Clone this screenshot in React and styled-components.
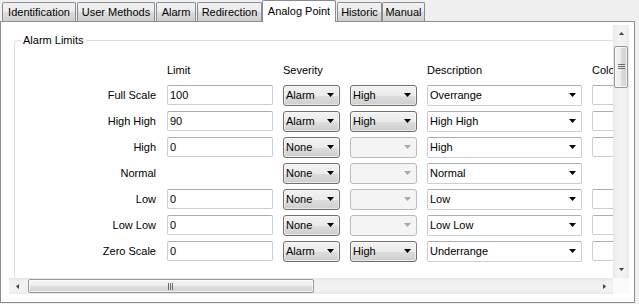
import React from "react";
import styled, { createGlobalStyle, css } from "styled-components";

const Global = createGlobalStyle`
  html, body { margin: 0; padding: 0; background: #f0f0f0; }
  body { font-family: "Liberation Sans", Arial, sans-serif; font-size: 11px; color: #000; }
`;

const Window = styled.div`
  width: 639px;
  height: 304px;
  background: #f0f0f0;
  overflow: hidden;
`;

const TabStrip = styled.div`
  position: relative;
  z-index: 1;
  display: flex;
  align-items: flex-end;
  height: 21px;
  padding-left: 2px;
`;

const Tab = styled.div`
  box-sizing: border-box;
  width: ${(p) => p.$w}px;
  margin-left: ${(p) => p.$ml}px;
  height: 19px;
  display: flex;
  align-items: center;
  justify-content: center;
  border: 1px solid #898c95;
  border-bottom: none;
  border-radius: 2px 2px 0 0;
  background: linear-gradient(#f2f2f2 0%, #ebebeb 50%, #dddddd 51%, #cfcfcf 100%);
  white-space: nowrap;
  ${(p) =>
    p.$active &&
    css`
      height: 22px;
      margin-bottom: -1px;
      background: #fff;
      padding-bottom: 1px;
    `}
`;

const Panel = styled.div`
  box-sizing: border-box;
  width: 635px;
  height: 282px;
  border: 1px solid #898c95;
  background: #fff;
  padding: 3px 5px 7px 8px;
`;

const ScrollFrame = styled.div`
  display: grid;
  grid-template-columns: 604px 16px;
  grid-template-rows: 253px 16px;
  width: 620px;
  height: 269px;
`;

const Viewport = styled.div`
  overflow: hidden;
  background: #fff;
`;

const Group = styled.fieldset`
  margin: 9px 0 0 5px;
  padding: 0;
  width: 700px;
  min-height: 320px;
  border: 1px solid #d5dfe5;
  border-radius: 3px;
  box-sizing: border-box;
`;

const Legend = styled.legend`
  margin-left: 6px;
  padding: 0 2px;
  line-height: 13px;
  font-size: 11px;
`;

const Grid = styled.div`
  display: grid;
  grid-template-columns: 142px 106px 57px 67px 155px 40px;
  grid-template-rows: 24px repeat(7, 26px);
  column-gap: 10px;
  align-items: center;
  margin-top: 11px;
`;

const Header = styled.div`
  white-space: nowrap;
`;

const RowLabel = styled.div`
  text-align: right;
  padding-right: 1px;
  white-space: nowrap;
`;

const TextBox = styled.div`
  box-sizing: border-box;
  height: 20px;
  border: 1px solid #c9ced6;
  border-top-color: #abadb3;
  border-radius: 2px;
  background: #fff;
  padding-left: 2px;
  display: flex;
  align-items: center;
  white-space: nowrap;
`;

const Combo = styled.div`
  box-sizing: border-box;
  height: 21px;
  display: flex;
  align-items: center;
  padding-left: 2px;
  border-radius: 3px;
  white-space: nowrap;
  ${(p) =>
    p.$variant === "list" &&
    css`
      border: 1px solid #707070;
      background: linear-gradient(#f2f2f2 0%, #ebebeb 50%, #dddddd 51%, #cfcfcf 100%);
      box-shadow: inset 0 0 0 1px rgba(255, 255, 255, 0.55);
    `}
  ${(p) =>
    p.$variant === "disabled" &&
    css`
      border: 1px solid #b8bcc0;
      background: #f4f4f4;
    `}
  ${(p) =>
    p.$variant === "edit" &&
    css`
      border: 1px solid #c9ced6;
      border-top-color: #abadb3;
      border-radius: 2px;
      background: #fff;
    `}
`;

const ComboValue = styled.span`
  flex: 1;
  overflow: hidden;
`;

const ComboArrow = styled.span`
  width: 17px;
  height: 100%;
  display: flex;
  align-items: center;
  justify-content: center;
  color: ${(p) => (p.$disabled ? "#a9a9a9" : "#000")};
`;

const VScroll = styled.div`
  display: flex;
  flex-direction: column;
  background: linear-gradient(to right, #e6e6e6 0, #f0f0f0 3px, #f3f3f3 50%, #f0f0f0 13px, #e9e9e9 100%);
`;

const HScroll = styled.div`
  display: flex;
  align-items: stretch;
  background: linear-gradient(#e6e6e6 0, #f0f0f0 3px, #f3f3f3 50%, #f0f0f0 13px, #e9e9e9 100%);
`;

const Corner = styled.div`
  background: #fafafa;
`;

const ArrowButton = styled.div`
  flex: 0 0 17px;
  display: flex;
  align-items: center;
  justify-content: center;
  color: #3c3c3c;
`;

const Spacer = styled.div`
  flex: 1;
`;

const VThumb = styled.div`
  box-sizing: border-box;
  margin: 4px 1px 0 1px;
  height: 42px;
  border: 1px solid #979797;
  border-radius: 2px;
  background: linear-gradient(to right, #f4f4f4 0%, #ececec 50%, #dedede 51%, #d2d2d2 100%);
  box-shadow: inset 0 0 0 1px rgba(255, 255, 255, 0.7);
  display: flex;
  align-items: center;
  justify-content: center;
`;

const HThumb = styled.div`
  box-sizing: border-box;
  margin: 1px 0 1px 2px;
  width: 286px;
  border: 1px solid #979797;
  border-radius: 2px;
  background: linear-gradient(#f4f4f4 0%, #ececec 50%, #dedede 51%, #d2d2d2 100%);
  box-shadow: inset 0 0 0 1px rgba(255, 255, 255, 0.7);
  display: flex;
  align-items: center;
  justify-content: center;
`;

const Tri = ({ color = "currentColor" }) => (
  <svg width="7" height="4" viewBox="0 0 7 4">
    <polygon points="0,0 7,0 3.5,4" fill={color} />
  </svg>
);

const SmallTri = ({ dir }) => {
  const horiz = dir === "left" || dir === "right";
  const pts = {
    up: "0,3 5,3 2.5,0",
    down: "0,0 5,0 2.5,3",
    left: "3,0 3,5 0,2.5",
    right: "0,0 0,5 3,2.5",
  }[dir];
  return (
    <svg width={horiz ? 3 : 5} height={horiz ? 5 : 3} viewBox={horiz ? "0 0 3 5" : "0 0 5 3"}>
      <polygon points={pts} fill="#404040" />
    </svg>
  );
};

const Grip = ({ vertical }) =>
  vertical ? (
    <svg width="7" height="6" viewBox="0 0 7 6">
      <rect x="0" y="0" width="7" height="1" fill="#6b6b6b" />
      <rect x="0" y="2" width="7" height="1" fill="#6b6b6b" />
      <rect x="0" y="4" width="7" height="1" fill="#6b6b6b" />
    </svg>
  ) : (
    <svg width="6" height="7" viewBox="0 0 6 7">
      <rect x="0" y="0" width="1" height="7" fill="#6b6b6b" />
      <rect x="2" y="0" width="1" height="7" fill="#6b6b6b" />
      <rect x="4" y="0" width="1" height="7" fill="#6b6b6b" />
    </svg>
  );

const tabs = [
  { label: "Identification", w: 74, ml: 0 },
  { label: "User Methods", w: 78, ml: 1 },
  { label: "Alarm", w: 40, ml: 1 },
  { label: "Redirection", w: 65, ml: 1 },
  { label: "Analog Point", w: 74, ml: 0, active: true },
  { label: "Historic", w: 45, ml: 1 },
  { label: "Manual", w: 43, ml: 0 },
];

const rows = [
  { label: "Full Scale", limit: "100", sev: "Alarm", level: "High", desc: "Overrange", color: true },
  { label: "High High", limit: "90", sev: "Alarm", level: "High", desc: "High High", color: true },
  { label: "High", limit: "0", sev: "None", level: null, desc: "High", color: true },
  { label: "Normal", limit: null, sev: "None", level: null, desc: "Normal", color: false },
  { label: "Low", limit: "0", sev: "None", level: null, desc: "Low", color: true },
  { label: "Low Low", limit: "0", sev: "None", level: null, desc: "Low Low", color: true },
  { label: "Zero Scale", limit: "0", sev: "Alarm", level: "High", desc: "Underrange", color: true },
];

const DropDown = ({ variant, value }) => (
  <Combo $variant={variant}>
    <ComboValue>{value}</ComboValue>
    <ComboArrow $disabled={variant === "disabled"}>
      <Tri />
    </ComboArrow>
  </Combo>
);

export default function App() {
  return (
    <>
      <Global />
      <Window>
        <TabStrip>
          {tabs.map((t) => (
            <Tab key={t.label} $w={t.w} $ml={t.ml} $active={t.active}>
              {t.label}
            </Tab>
          ))}
        </TabStrip>
        <Panel>
          <ScrollFrame>
            <Viewport>
              <Group>
                <Legend>Alarm Limits</Legend>
                <Grid>
                  <span />
                  <Header>Limit</Header>
                  <Header>Severity</Header>
                  <span />
                  <Header>Description</Header>
                  <Header>Color</Header>
                  {rows.map((r) => (
                    <React.Fragment key={r.label}>
                      <RowLabel>{r.label}</RowLabel>
                      {r.limit !== null ? <TextBox>{r.limit}</TextBox> : <span />}
                      <DropDown variant="list" value={r.sev} />
                      {r.level ? (
                        <DropDown variant="list" value={r.level} />
                      ) : (
                        <DropDown variant="disabled" value="" />
                      )}
                      <DropDown variant="edit" value={r.desc} />
                      {r.color ? <TextBox /> : <span />}
                    </React.Fragment>
                  ))}
                </Grid>
              </Group>
            </Viewport>
            <VScroll>
              <ArrowButton>
                <SmallTri dir="up" />
              </ArrowButton>
              <VThumb>
                <Grip vertical />
              </VThumb>
              <Spacer />
              <ArrowButton>
                <SmallTri dir="down" />
              </ArrowButton>
            </VScroll>
            <HScroll>
              <ArrowButton>
                <SmallTri dir="left" />
              </ArrowButton>
              <HThumb>
                <Grip />
              </HThumb>
              <Spacer />
              <ArrowButton>
                <SmallTri dir="right" />
              </ArrowButton>
            </HScroll>
            <Corner />
          </ScrollFrame>
        </Panel>
      </Window>
    </>
  );
}
